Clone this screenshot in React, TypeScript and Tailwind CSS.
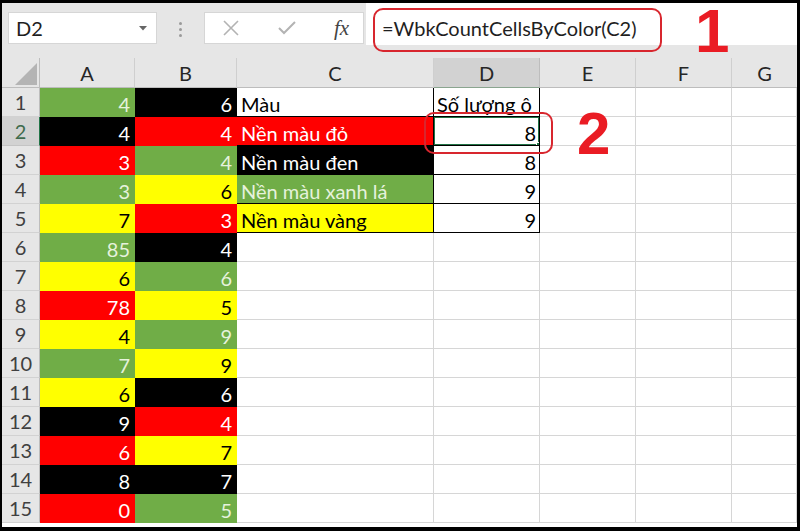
import React from "react";

type Fill = "g" | "k" | "r" | "y" | "w";

const fillClass: Record<Fill, string> = {
  g: "bg-[#70ad47] text-[#e6f2dc] border-transparent",
  k: "bg-black text-white border-transparent",
  r: "bg-[#ff0000] text-white border-transparent",
  y: "bg-[#ffff00] text-black border-transparent",
  w: "bg-white text-black border-[#d6d6d6]",
};

// cột A, cột B: [giá trị, màu nền]
const data: [number, Fill, number, Fill][] = [
  [4, "g", 6, "k"],
  [4, "k", 4, "r"],
  [3, "r", 4, "g"],
  [3, "g", 6, "y"],
  [7, "y", 3, "r"],
  [85, "g", 4, "k"],
  [6, "y", 6, "g"],
  [78, "r", 5, "y"],
  [4, "y", 9, "g"],
  [7, "g", 9, "y"],
  [6, "y", 6, "k"],
  [9, "k", 4, "r"],
  [6, "r", 7, "y"],
  [8, "k", 7, "k"],
  [0, "r", 5, "g"],
];

const legend: [string, Fill, number][] = [
  ["Nền màu đỏ", "r", 8],
  ["Nền màu đen", "k", 8],
  ["Nền màu xanh lá", "g", 9],
  ["Nền màu vàng", "y", 9],
];

const cell = "h-[29px] border-r border-b flex items-end leading-[24px] overflow-hidden whitespace-nowrap";
const colHead =
  "h-[30px] bg-[#e6e6e6] border-r border-b border-r-[#cfcfcf] border-b-[#bdbdbd] flex items-center justify-center text-[#262626] leading-none";

function RowHead({ n }: { n: number }) {
  const sel = n === 2;
  return (
    <div
      className={
        sel
          ? "h-[29px] bg-[#d2d2d2] text-[#3f6b4d] border-r border-b border-r-[#217346] border-b-[#c4c4c4] flex items-center justify-center"
          : "h-[29px] bg-[#e6e6e6] text-[#404040] border-r border-b border-r-[#bdbdbd] border-b-[#d2d2d2] flex items-center justify-center"
      }
    >
      {n}
    </div>
  );
}

function Empty() {
  return <div className={`${cell} ${fillClass.w}`} />;
}

export default function App() {
  const rows = data.map((r, i) => {
    const n = i + 1;
    const [a, af, b, bf] = r;
    let c: React.ReactNode = <Empty />;
    let d: React.ReactNode = <Empty />;
    if (n === 1) {
      c = <div className={`${cell} bg-white text-black border-black pl-[4px]`}>Màu</div>;
      d = <div className={`${cell} bg-white text-black border-black pl-[3px]`}>Số lượng ô</div>;
    } else if (n <= 5) {
      const [label, f, count] = legend[n - 2];
      c = <div className={`${cell} ${fillClass[f]} !border-black pl-[4px]`}>{label}</div>;
      d = (
        <div className={`${cell} relative bg-white text-black border-black justify-end pr-[3px]`}>
          {n === 2 && (
            <>
              <div className="absolute -left-px -top-px right-[-1px] bottom-[-1px] border-2 border-[#217346]" />
              <div className="absolute right-[-4px] bottom-[-4px] w-[7px] h-[7px] bg-[#217346] border border-white" />
            </>
          )}
          <span className="relative">{count}</span>
        </div>
      );
    }
    return (
      <React.Fragment key={n}>
        <RowHead n={n} />
        <div className={`${cell} ${fillClass[af]} justify-end pr-[4px]`}>{a}</div>
        <div className={`${cell} ${fillClass[bf]} justify-end pr-[4px]`}>{b}</div>
        {c}
        {d}
        <Empty />
        <Empty />
        <Empty />
      </React.Fragment>
    );
  });

  return (
    <div className="relative w-[800px] h-[531px] bg-black pt-[3px] pl-[2px] pr-[3px] pb-[4px] font-['Lato','Liberation_Sans',sans-serif] text-[20px]">
      <div className="flex flex-col w-full h-full bg-white">
        {/* thanh công thức */}
        <div className="flex items-start h-[55px] bg-[#e6e6e6] shrink-0">
          <div className="ml-[6px] mt-[9px] w-[149px] h-[32px] bg-white border border-[#d6d6d6] flex items-center justify-between pl-[7px] pr-[9px] text-[#1f1f1f]">
            <span>D2</span>
            <svg width="8" height="5" viewBox="0 0 8 5">
              <polygon points="0,0 8,0 4,4.5" fill="#666" />
            </svg>
          </div>
          <div className="ml-[22px] mt-[19px] flex flex-col gap-[3px]">
            <span className="w-[3px] h-[3px] rounded-full bg-[#9a9a9a]" />
            <span className="w-[3px] h-[3px] rounded-full bg-[#9a9a9a]" />
            <span className="w-[3px] h-[3px] rounded-full bg-[#9a9a9a]" />
          </div>
          <div className="ml-[22px] mt-[9px] w-[160px] h-[32px] bg-white border border-[#d6d6d6] flex items-center">
            <svg className="ml-[17px]" width="18" height="16" viewBox="0 0 18 16">
              <path d="M2 1 L16 15 M16 1 L2 15" stroke="#b3b3b3" strokeWidth="1.6" fill="none" />
            </svg>
            <svg className="ml-[38px]" width="18" height="14" viewBox="0 0 18 14">
              <path d="M1 7 L6 12 L17 1" stroke="#b3b3b3" strokeWidth="2" fill="none" />
            </svg>
            <span className="ml-[38px] font-['Liberation_Serif',serif] italic text-[21px] text-[#444] leading-none">
              fx
            </span>
          </div>
          <div className="ml-[2px] flex-1 h-[42px] bg-white pl-[16px] pt-[13px] leading-[24px] text-[#1f1f1f]">
            =WbkCountCellsByColor(C2)
          </div>
        </div>

        {/* bảng tính */}
        <div className="grid grid-cols-[38px_95px_102px_197px_106px_96px_96px_65px]">
          <div className="h-[30px] bg-[#e6e6e6] border-r border-b border-r-[#bdbdbd] border-b-[#bdbdbd] flex items-end justify-end pr-[2px] pb-[2px]">
            <svg width="22" height="22" viewBox="0 0 22 22">
              <polygon points="22,0 22,22 0,22" fill="#b4b4b4" />
            </svg>
          </div>
          <div className={colHead}>A</div>
          <div className={colHead}>B</div>
          <div className={colHead}>C</div>
          <div className="h-[30px] bg-[#d2d2d2] border-r border-b border-r-[#bdbdbd] border-b-[#8aa58f] flex items-center justify-center text-[#262626] leading-none">
            D
          </div>
          <div className={colHead}>E</div>
          <div className={colHead}>F</div>
          <div className="h-[30px] bg-[#e6e6e6] border-b border-b-[#bdbdbd] flex items-center justify-center text-[#262626] leading-none">
            G
          </div>
          {rows}
        </div>
      </div>

      {/* chú thích */}
      <div className="absolute left-[373px] top-[8px] w-[289px] h-[44px] border-2 border-[#d8262e] rounded-[10px]" />
      <div className="absolute left-[424px] top-[112px] w-[129px] h-[42px] border-2 border-[#d8262e] rounded-[10px]" />
      <div className="absolute left-[695px] top-[4px] font-['Liberation_Sans',sans-serif] font-bold text-[62px] leading-[54px] text-[#ea1c24]">
        1
      </div>
      <div className="absolute left-[577px] top-[104px] font-['Liberation_Sans',sans-serif] font-bold text-[60px] leading-none text-[#ea1c24]">
        2
      </div>
    </div>
  );
}
